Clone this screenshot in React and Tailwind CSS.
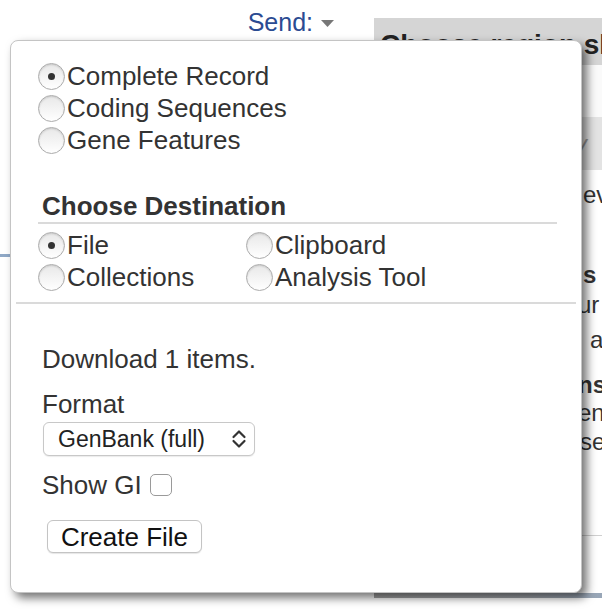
import React from 'react';

const Radio = ({ checked }) => (
  <span className="relative flex h-[27px] w-[27px] shrink-0 items-center justify-center rounded-full border border-[#acacac] bg-gradient-to-b from-[#e8e8e8] to-white shadow-[inset_0_1px_2px_rgba(0,0,0,0.14)]">
    {checked && <span className="h-[7px] w-[7px] rounded-full bg-[#333]" />}
  </span>
);

const Option = ({ label, checked }) => (
  <label className="flex h-[32px] items-center gap-[2px]">
    <Radio checked={checked} />
    <span>{label}</span>
  </label>
);

const App = () => {
  return (
    <div className="relative h-[610px] w-[602px] overflow-hidden bg-white font-['Liberation_Sans',Arial,sans-serif] text-[#333]">
      {/* page behind the menu */}
      <div className="flex h-full">
        <div className="flex w-[374px] shrink-0 flex-col">
          <div className="flex items-center justify-end gap-[8px] pr-[40px] pt-[7px]">
            <span className="text-[25px] leading-[30px] text-[#2b4b92]">Send:</span>
            <svg width="13" height="8" viewBox="0 0 13 8" className="mt-[4px]">
              <path d="M0 0 L13 0 L6.5 7 Z" fill="#777" />
            </svg>
          </div>
          <div className="mt-[217px] h-[3px] w-full bg-[#8fa8c6]" />
        </div>

        <div className="mt-[18px] flex w-[300px] shrink-0 flex-col whitespace-nowrap text-[24px]">
          <div className="h-[47px] bg-[#d5d5d5] pl-[6px] pt-[12px] text-[28px] font-bold leading-[30px] text-[#222]">
            Choose region show
          </div>
          <div className="h-[52px] bg-[#fafafa]" />
          <div className="flex h-[53px] items-center bg-[#e3e3e3] pl-[201px] italic text-[#999]">y</div>
          <div className="mt-[11px] flex h-[28px] items-center pl-[209px]">ev</div>
          <div className="mt-[52px] flex h-[28px] items-center pl-[209px] font-bold">s</div>
          <div className="mt-[2px] flex h-[28px] items-center pl-[204px]">ur</div>
          <div className="mt-[7px] flex h-[28px] items-center pl-[216px]">a</div>
          <div className="mt-[17px] flex h-[28px] items-center pl-[204px] font-bold">ns</div>
          <div className="flex h-[28px] items-center pl-[204px]">en</div>
          <div className="mt-[1px] flex h-[28px] items-center pl-[206px]">se</div>
          <div className="mt-[79px] h-px bg-[#d0d0d0]" />
          <div className="h-[57px]" />
          <div className="h-[5px] bg-gradient-to-r from-[#a3a3a3] via-[#a0a4aa] to-[#90a8c4]" />
        </div>
      </div>

      {/* send menu */}
      <div className="absolute left-[10px] top-[40px] h-[553px] w-[572px] rounded-[8px] border border-[#c4c4c4] bg-white pt-[19px] text-[26px] leading-[30px] shadow-[5px_5px_10px_rgba(0,0,0,0.55)]">
        <div className="flex flex-col pl-[27px]">
          <Option label="Complete Record" checked />
          <Option label="Coding Sequences" />
          <Option label="Gene Features" />
        </div>

        <div className="ml-[27px] mt-[35px] w-[519px]">
          <div className="border-b-2 border-[#dadada] pb-[1px] pl-[4px] font-bold">Choose Destination</div>
          <div className="mt-[5px] grid grid-cols-[208px_1fr]">
            <Option label="File" checked />
            <Option label="Clipboard" />
            <Option label="Collections" />
            <Option label="Analysis Tool" />
          </div>
        </div>

        <div className="mx-[5px] mt-[9px] h-[2px] bg-[#dadada]" />

        <div className="flex flex-col items-start pl-[31px]">
          <div className="mt-[40px]">Download 1 items.</div>
          <div className="mt-[15px]">Format</div>
          <div className="ml-[1px] mt-[3px] flex h-[34px] w-[212px] items-center justify-between rounded-[6px] border border-[#c8c8c8] bg-white pl-[14px] pr-[7px] text-[23px] text-[#222] shadow-[0_1px_1px_rgba(0,0,0,0.08)]">
            <span>GenBank (full)</span>
            <svg width="16" height="22" viewBox="0 0 16 22" fill="none" stroke="#333" strokeWidth="2.2" strokeLinecap="round" strokeLinejoin="round">
              <path d="M2.5 9 L8 3.5 L13.5 9" />
              <path d="M2.5 13 L8 18.5 L13.5 13" />
            </svg>
          </div>
          <div className="mt-[14px] flex h-[30px] items-center gap-[8px]">
            <span>Show GI</span>
            <span className="h-[22px] w-[22px] rounded-[5px] border border-[#9a9a9a] bg-white" />
          </div>
          <button className="ml-[5px] mt-[20px] h-[33px] w-[155px] rounded-[6px] border border-[#c4c4c4] bg-white text-[26px] leading-[30px] text-[#111] shadow-[0_1px_1px_rgba(0,0,0,0.1)]">
            Create File
          </button>
        </div>
      </div>
    </div>
  );
};

export default App;
